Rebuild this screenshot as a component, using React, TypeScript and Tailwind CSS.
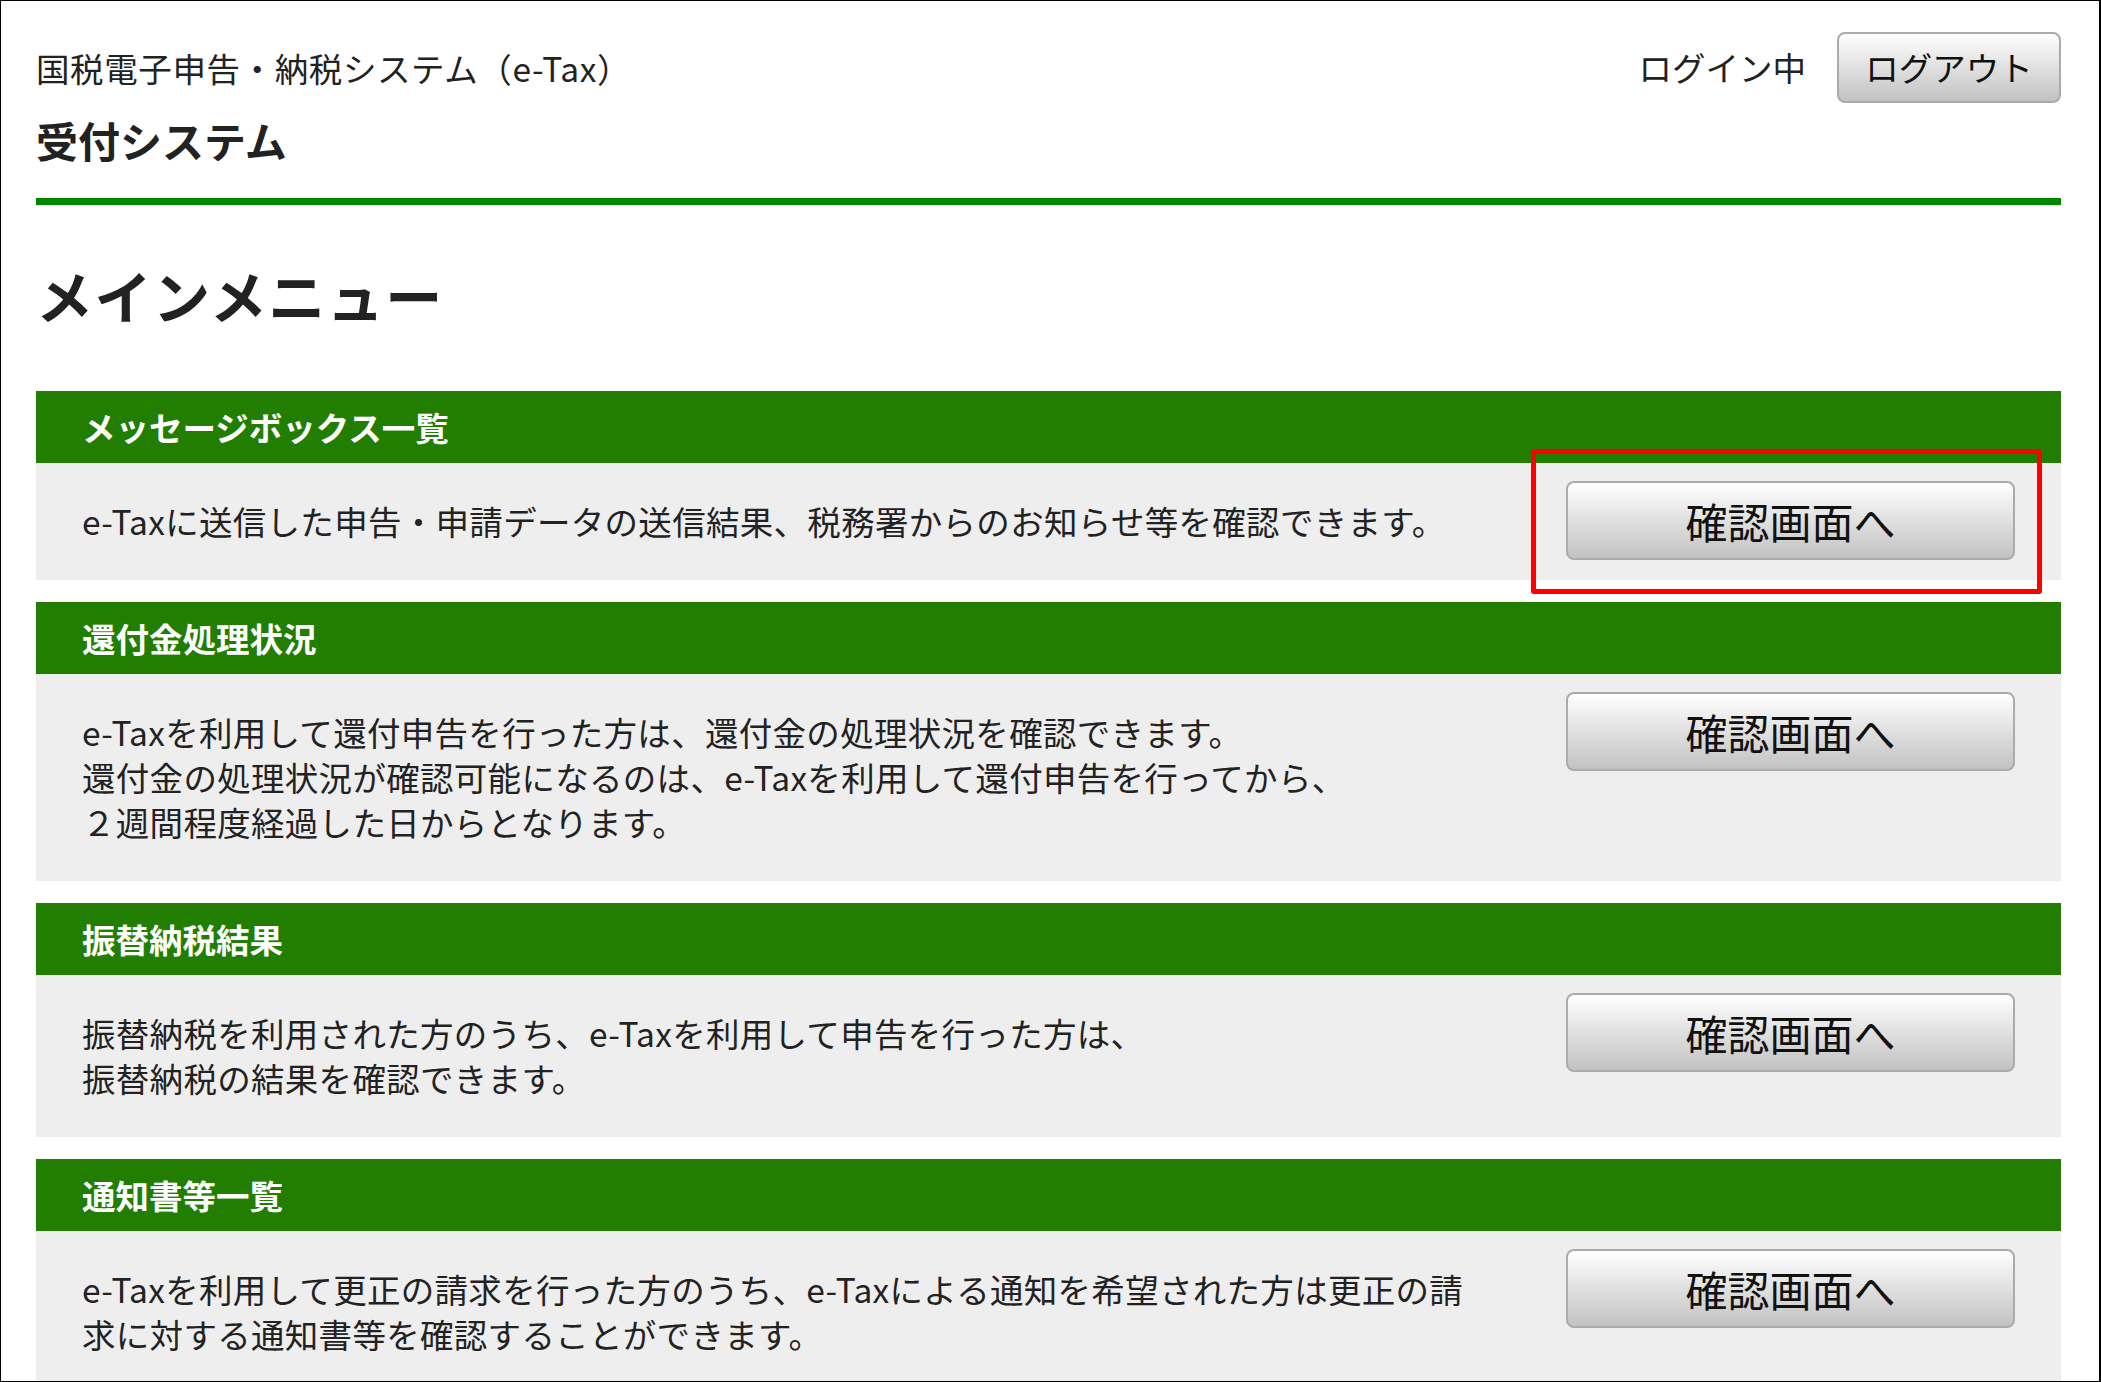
import React from "react";

interface MenuSection {
  title: string;
  lines: string[];
  highlighted?: boolean;
}

const sections: MenuSection[] = [
  {
    title: "メッセージボックス一覧",
    lines: ["e-Taxに送信した申告・申請データの送信結果、税務署からのお知らせ等を確認できます。"],
    highlighted: true,
  },
  {
    title: "還付金処理状況",
    lines: [
      "e-Taxを利用して還付申告を行った方は、還付金の処理状況を確認できます。",
      "還付金の処理状況が確認可能になるのは、e-Taxを利用して還付申告を行ってから、",
      "２週間程度経過した日からとなります。",
    ],
  },
  {
    title: "振替納税結果",
    lines: [
      "振替納税を利用された方のうち、e-Taxを利用して申告を行った方は、",
      "振替納税の結果を確認できます。",
    ],
  },
  {
    title: "通知書等一覧",
    lines: [
      "e-Taxを利用して更正の請求を行った方のうち、e-Taxによる通知を希望された方は更正の請",
      "求に対する通知書等を確認することができます。",
    ],
  },
];

const GrayButton: React.FC<{ label: string; className?: string }> = ({ label, className = "" }) => (
  <button
    className={`flex items-center justify-center rounded-[8px] border-2 border-[#ababab] bg-gradient-to-b from-[#ffffff] to-[#c2c2c2] text-[#111] ${className}`}
  >
    {label}
  </button>
);

const MenuBlock: React.FC<{ section: MenuSection }> = ({ section }) => (
  <div className="relative mb-[22px]">
    <div className="flex h-[72px] items-center bg-[#217e00] px-[46px]">
      <h2 className="text-[33.5px] font-bold leading-none text-white">{section.title}</h2>
    </div>
    <div className="flex items-start justify-between bg-[#eeeeee] px-[46px]">
      <p className="whitespace-nowrap pb-[37px] pt-[35px] text-[33.5px] leading-[45px] tracking-[0.3px] text-[#222]">
        {section.lines.map((line, i) => (
          <React.Fragment key={i}>
            {i > 0 && <br />}
            {line}
          </React.Fragment>
        ))}
      </p>
      <GrayButton label="確認画面へ" className="mb-[20px] mt-[18px] h-[79px] w-[449px] shrink-0 text-[42px]" />
    </div>
    {section.highlighted && (
      <div className="pointer-events-none absolute right-[19px] top-[58px] h-[145px] w-[511px] rounded-[3px] border-[5px] border-[#ff0000]" />
    )}
  </div>
);

export default function App() {
  return (
    <div className="box-border h-[1382px] w-full overflow-hidden border border-r-2 border-black bg-white pl-[35px] pr-[38px] font-['Noto_Sans_CJK_JP','Noto_Sans',sans-serif] text-[#222]">
      {/* site header */}
      <header className="flex items-start justify-between">
        <div className="pt-[45px]">
          <div className="text-[33.5px] leading-[44px] tracking-[0.6px]">国税電子申告・納税システム（e-Tax）</div>
          <div className="mt-[22px] text-[42px] font-bold leading-[56px]">受付システム</div>
        </div>
        <div className="flex items-center pt-[31px]">
          <span className="mr-[31px] text-[33.5px]">ログイン中</span>
          <GrayButton label="ログアウト" className="h-[71px] w-[224px] text-[33.5px]" />
        </div>
      </header>
      <div className="mt-[30px] h-[7px] bg-[#008800]" />

      <h1 className="mb-[62px] mt-[54px] text-[57px] font-bold leading-[70px] tracking-[1.5px]">メインメニュー</h1>

      {sections.map((s) => (
        <MenuBlock key={s.title} section={s} />
      ))}
    </div>
  );
}
